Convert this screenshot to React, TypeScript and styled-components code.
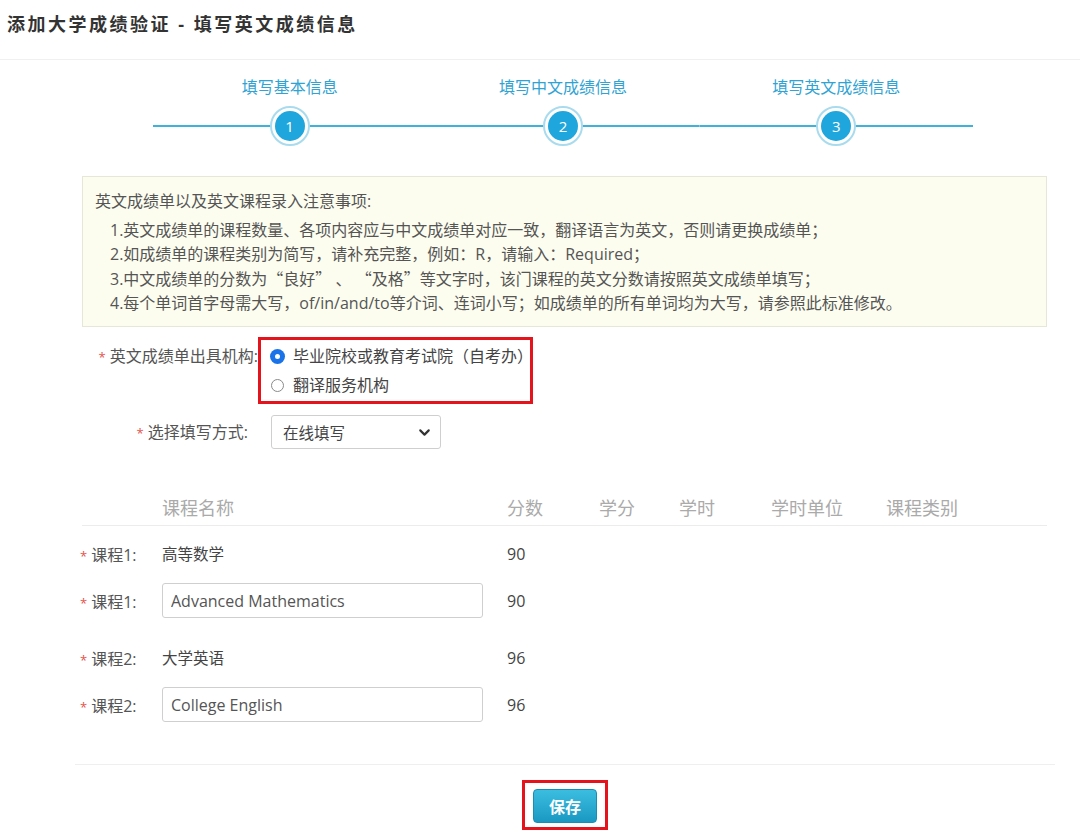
import { styled, createGlobalStyle } from "styled-components"
import { ChevronDown } from "lucide-react"
import type { ReactNode } from "react"

const GlobalStyle = createGlobalStyle`
body {
    margin: 0;
    background: #fff;
    font-family: "Open Sans", "Noto Sans CJK SC", sans-serif;
    color: #555;
}
`

const steps = ['填写基本信息', '填写中文成绩信息', '填写英文成绩信息']

const columns = ['', '课程名称', '分数', '学分', '学时', '学时单位', '课程类别']

interface ICourse {
    no: number
    cn: string
    en: string
    score: number
}

const courses: ICourse[] = [
    { no: 1, cn: '高等数学', en: 'Advanced Mathematics', score: 90 },
    { no: 2, cn: '大学英语', en: 'College English', score: 96 },
]

export default function App() {
    // quotes need the CJK font so they are full width, as in the original page
    const notes: ReactNode[] = [
        '1.英文成绩单的课程数量、各项内容应与中文成绩单对应一致，翻译语言为英文，否则请更换成绩单；',
        '2.如成绩单的课程类别为简写，请补充完整，例如：R，请输入：Required；',
        <>3.中文成绩单的分数为<Cjk>“良好”</Cjk> 、 <Cjk>“及格”</Cjk>等文字时，该门课程的英文分数请按照英文成绩单填写；</>,
        '4.每个单词首字母需大写，of/in/and/to等介词、连词小写；如成绩单的所有单词均为大写，请参照此标准修改。',
    ]

    return (
        <>
            <GlobalStyle />
            <Page>
                <Header>添加大学成绩验证 - 填写英文成绩信息</Header>

                <Stepper>
                    {steps.map((s, i) => (
                        <Step key={s}>
                            <StepLabel>{s}</StepLabel>
                            <StepTrack>
                                <StepRing>
                                    <StepDot>{i + 1}</StepDot>
                                </StepRing>
                            </StepTrack>
                        </Step>
                    ))}
                </Stepper>

                <Notice>
                    <NoticeTitle>英文成绩单以及英文课程录入注意事项:</NoticeTitle>
                    {notes.map((n, i) => (
                        <NoticeItem key={i}>{n}</NoticeItem>
                    ))}
                </Notice>

                <FieldRow $top={10}>
                    <FieldLabel $pad={6}>
                        <Star>*</Star>英文成绩单出具机构:
                    </FieldLabel>
                    <Highlight>
                        <RadioOption>
                            <Radio $checked />
                            毕业院校或教育考试院（自考办）
                        </RadioOption>
                        <RadioOption>
                            <Radio />
                            翻译服务机构
                        </RadioOption>
                    </Highlight>
                </FieldRow>

                <FieldRow $top={11} $center>
                    <FieldLabel $right={10}>
                        <Star>*</Star>选择填写方式:
                    </FieldLabel>
                    <SelectBox>
                        在线填写
                        <ChevronDown size={17} strokeWidth={3} color="#333" />
                    </SelectBox>
                </FieldRow>

                <Table>
                    <HeadRow>
                        {columns.map((c, i) => (
                            <HeadCell key={i}>{c}</HeadCell>
                        ))}
                    </HeadRow>
                    {courses.map(c => (
                        <Group key={c.no}>
                            <BodyRow>
                                <RowLabel><Star>*</Star>课程{c.no}:</RowLabel>
                                <CnName>{c.cn}</CnName>
                                <Score>{c.score}</Score>
                            </BodyRow>
                            <BodyRow>
                                <RowLabel><Star>*</Star>课程{c.no}:</RowLabel>
                                <EnInput defaultValue={c.en} />
                                <Score>{c.score}</Score>
                            </BodyRow>
                        </Group>
                    ))}
                </Table>

                <Footer>
                    <Highlight $button>
                        <SaveButton>保存</SaveButton>
                    </Highlight>
                </Footer>
            </Page>
        </>
    )
}

const Page = styled.div`
width: 1080px;
min-height: 836px;
`
const Header = styled.div`
height: 60px;
box-sizing: border-box;
padding: 13px 0 0 7px;
font-size: 18px;
letter-spacing: 2.5px;
line-height: 22px;
font-weight: 700;
color: #333;
border-bottom: 1px solid #f0f0f0;
white-space: pre;
`
const Stepper = styled.div`
margin: 17px 0 0 153px;
width: 820px;
display: grid;
grid-template-columns: repeat(3, 1fr);
`
const Step = styled.div`
display: flex;
flex-direction: column;
align-items: center;
gap: 9px;
`
const StepLabel = styled.div`
font-size: 16px;
line-height: 20px;
color: #2fa3d4;
`
const StepTrack = styled.div`
width: 100%;
height: 40px;
display: flex;
justify-content: center;
align-items: center;
background: linear-gradient(#3fb2dc, #3fb2dc) center / 100% 2px no-repeat;
`
const StepRing = styled.div`
width: 40px;
height: 40px;
box-sizing: border-box;
border-radius: 50%;
border: 2px solid #a9dbee;
background: #fff;
display: flex;
justify-content: center;
align-items: center;
`
const StepDot = styled.div`
width: 30px;
height: 30px;
border-radius: 50%;
background: #1fa6dc;
color: #fff;
font-size: 15px;
display: flex;
justify-content: center;
align-items: center;
`
const Notice = styled.div`
margin: 30px 0 0 82px;
width: 965px;
box-sizing: border-box;
padding: 12px 12px 11px;
background: #fcfdef;
border: 1px solid #e6e7d8;
font-size: 16px;
line-height: 24px;
color: #555;
`
const NoticeTitle = styled.div`
margin-bottom: 5px;
`
const NoticeItem = styled.div`
padding-left: 15px;
white-space: pre;
`
const Cjk = styled.span`
font-family: "Noto Sans CJK SC", sans-serif;
`
const FieldRow = styled.div<{ $top: number; $center?: boolean }>`
display: flex;
align-items: ${p => (p.$center ? 'center' : 'flex-start')};
margin-top: ${p => p.$top}px;
`
const FieldLabel = styled.div<{ $pad?: number; $right?: number }>`
width: 175px;
margin-left: 83px;
box-sizing: border-box;
padding-top: ${p => p.$pad || 0}px;
padding-right: ${p => p.$right || 0}px;
text-align: right;
font-size: 16px;
line-height: 26px;
color: #555;
white-space: nowrap;
`
const Star = styled.span`
color: #e5534b;
font-size: 13px;
margin-right: 4px;
`
const Highlight = styled.div<{ $button?: boolean }>`
width: ${p => (p.$button ? 'auto' : '275px')};
box-sizing: border-box;
border: 3px solid #e5131b;
padding: ${p => (p.$button ? '6px 8px 4px' : '3px 0 3px 10px')};
display: flex;
flex-direction: column;
gap: 3px;
white-space: nowrap;
`
const RadioOption = styled.label`
display: flex;
align-items: center;
gap: 9px;
font-size: 16px;
line-height: 26px;
color: #444;
`
const Radio = styled.span<{ $checked?: boolean }>`
flex: none;
width: 13px;
height: 13px;
box-sizing: border-box;
border-radius: 50%;
border: ${p => (p.$checked ? '4px solid #1a73e8' : '1px solid #8a8a8a')};
background: #fff;
box-shadow: ${p => (p.$checked ? '0 0 0 1px #1a73e8' : 'none')};
`
const SelectBox = styled.div`
margin-left: 13px;
width: 170px;
height: 34px;
box-sizing: border-box;
padding: 0 7px 0 11px;
border: 1px solid #cfcfcf;
border-radius: 3px;
display: flex;
justify-content: space-between;
align-items: center;
font-size: 15.5px;
color: #444;
`
const Table = styled.div`
margin: 40px 0 0 82px;
width: 965px;
`
const grid = `
display: grid;
grid-template-columns: 80px 345px 92px 80px 92px 115px 1fr;
align-items: center;
`
const HeadRow = styled.div`
${grid}
height: 36px;
border-bottom: 1px solid #ececec;
`
const HeadCell = styled.div`
font-size: 18px;
color: #aaa;
`
const Group = styled.div`
margin-top: 4px;
& + & {
    margin-top: 10px;
}
`
const BodyRow = styled.div`
${grid}
height: 47px;
`
const RowLabel = styled.div`
margin-left: -2px;
font-size: 16px;
color: #555;
white-space: nowrap;
`
const CnName = styled.div`
font-size: 15.5px;
color: #444;
`
const Score = styled.div`
font-size: 16px;
color: #444;
`
const EnInput = styled.input`
width: 321px;
height: 35px;
box-sizing: border-box;
padding: 0 8px;
border: 1px solid #cfcfcf;
border-radius: 3px;
font-family: "Open Sans", sans-serif;
font-size: 16px;
color: #555;
outline: none;
`
const Footer = styled.div`
margin: 36px 25px 0 75px;
padding-top: 15px;
border-top: 1px solid #efefef;
display: flex;
justify-content: center;
`
const SaveButton = styled.button`
width: 64px;
height: 34px;
border: 1px solid #1a8db5;
border-radius: 4px;
background: linear-gradient(#3bbde0, #1a98c2);
color: #fff;
font-family: "Noto Sans CJK SC", sans-serif;
font-size: 16px;
font-weight: 700;
`
